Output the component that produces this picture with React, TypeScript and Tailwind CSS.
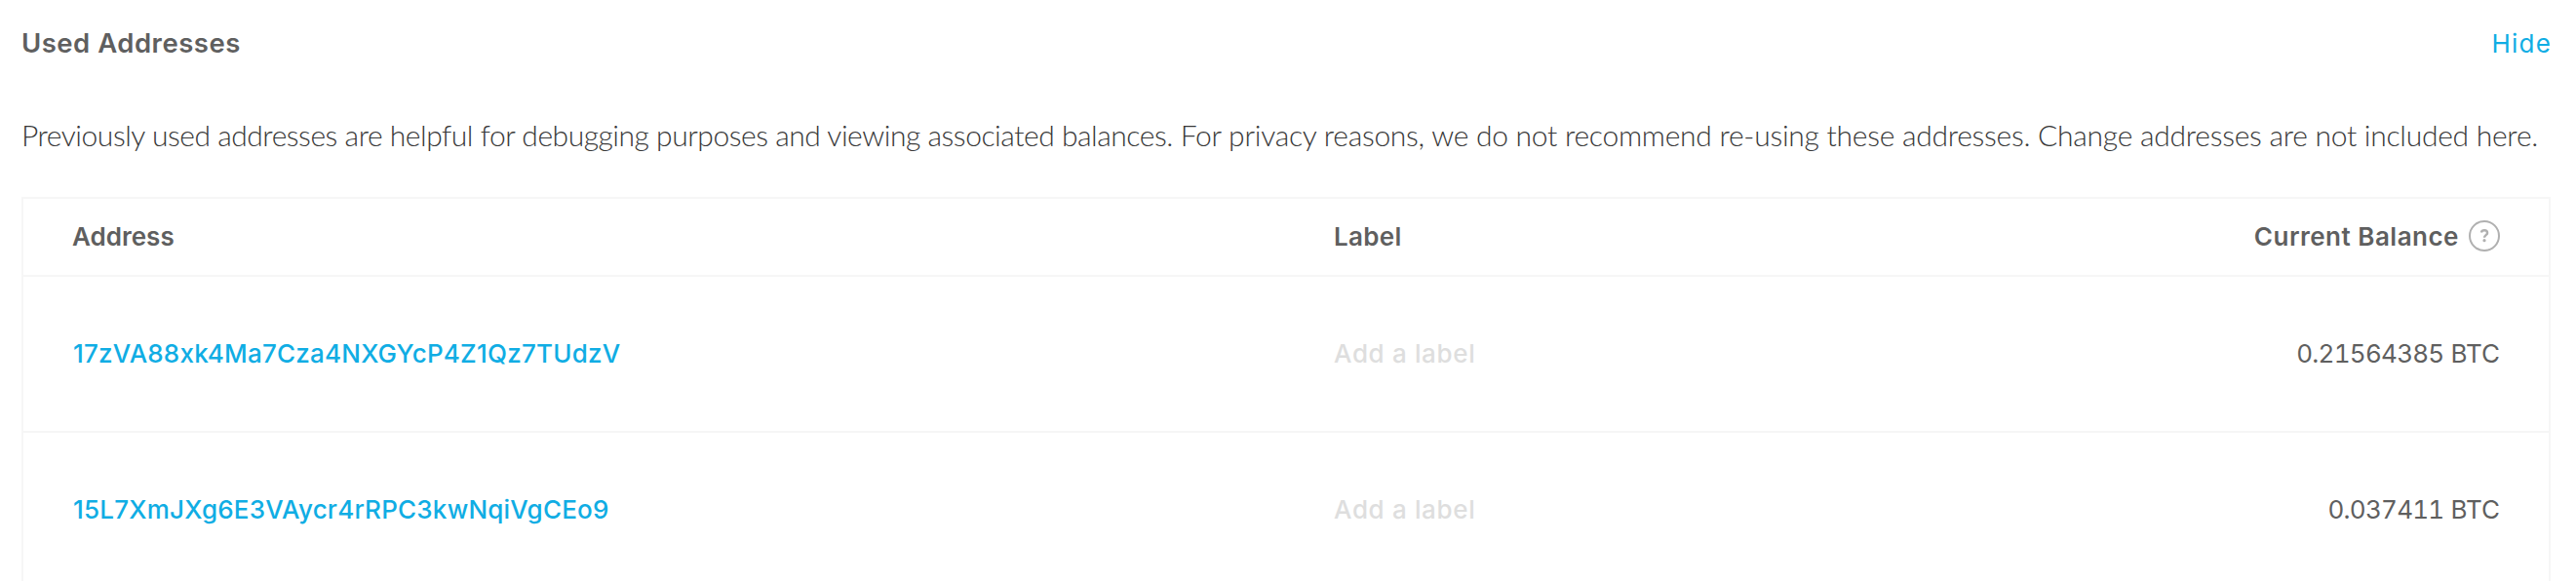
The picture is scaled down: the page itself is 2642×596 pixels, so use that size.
import React from 'react';

type AddressType = {
  address: string;
  balance: string;
};

const usedAddresses: AddressType[] = [
  {
    address: '17zVA88xk4Ma7Cza4NXGYcP4Z1Qz7TUdzV',
    balance: '0.21564385',
  },
  {
    address: '15L7XmJXg6E3VAycr4rRPC3kwNqiVgCEo9',
    balance: '0.037411',
  },
];

function HelpIcon() {
  return (
    <svg width="32" height="32" viewBox="0 0 32 32" fill="none" className="mb-0.5 ml-2.5 shrink-0 text-[#b0b0b0]">
      <circle cx="16" cy="16" r="15" stroke="currentColor" strokeWidth="2" />
      <path d="M12.9 12.6c.3-1.5 1.4-2.3 3.1-2.3 1.9 0 3.1 1 3.1 2.6 0 2.3-3.1 2.3-3.1 4.9" stroke="currentColor" strokeWidth="2.4" />
      <circle cx="16" cy="20.7" r="1.6" fill="currentColor" />
    </svg>
  );
}

function App() {
  return (
    <main className="h-[596px] w-full overflow-hidden bg-white pl-[22px] pr-[26px] font-['Inter',sans-serif] text-[26px] leading-8 text-[#5f5f5f]">
      <header className="flex items-center justify-between pt-7">
        <h1 className="text-[27.5px] font-semibold leading-8 tracking-[0.5px]">Used Addresses</h1>
        <button type="button" className="-mr-px pt-0.5 leading-[30px] tracking-[1.2px] text-[#10ade4]">Hide</button>
      </header>
      <p className="mt-[58px] whitespace-nowrap font-['Lato',sans-serif] text-[30px] font-light leading-10 tracking-[-0.26px] text-[#383838]">
        <span className="tracking-[-0.46px]">
          Previously used addresses are helpful for debugging purposes and viewing associated balances.
        </span>
        {' '}
        For privacy reasons, we do not recommend re-using these addresses. Change addresses are not included here.
      </p>
      <section className="mt-11 border-2 border-[#f6f6f6]">
        <div className="grid h-20 grid-cols-[1294px_1fr_auto] items-center border-b-2 border-[#f6f6f6] px-[50px] font-semibold">
          <span>Address</span>
          <span className="tracking-[0.3px]">Label</span>
          <div className="flex items-center">
            <span className="tracking-[0.5px]">Current Balance</span>
            <HelpIcon />
          </div>
        </div>
        {usedAddresses.map((item) => (
          <div key={item.address} className="grid h-40 grid-cols-[1294px_1fr_auto] items-center border-b-2 border-[#f6f6f6] px-[50px]">
            <a href="#address" className="pl-px font-medium tracking-[0.22px] text-[#10ade4]">{item.address}</a>
            <span className="font-medium tracking-[0.65px] text-[#dedede]">Add a label</span>
            <span className="tabular-nums">
              <span className="tracking-[-0.75px]">{item.balance}</span>
              {' BTC'}
            </span>
          </div>
        ))}
      </section>
    </main>
  );
}

export default App;
